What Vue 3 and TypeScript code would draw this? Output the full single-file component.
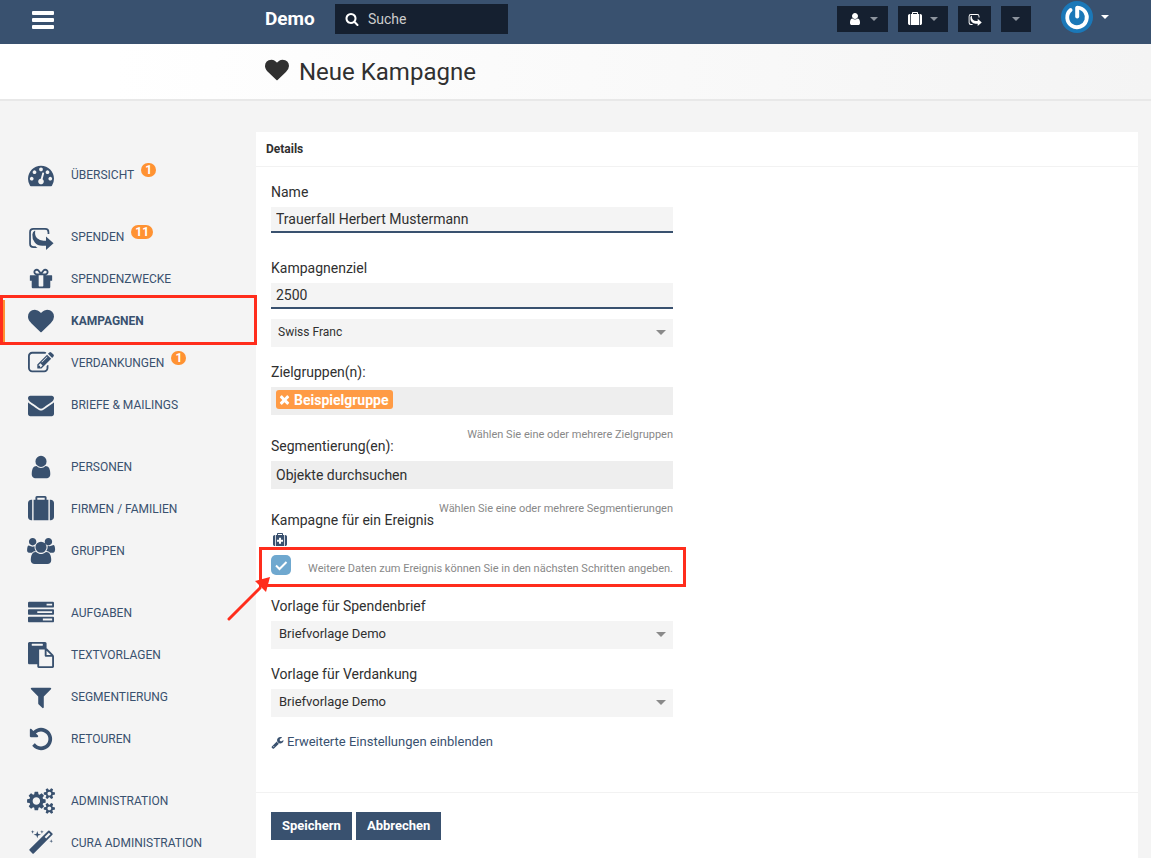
<script setup lang="ts">
import { ref } from 'vue'

interface NavItem {
  label: string
  icon: string
  badge?: number
  active?: boolean
}

const icons: Record<string, string> = {
  heart:
    'M896 1664q-26 0-44-18l-624-602q-10-8-27.500-26t-55.500-65.500-68-97.500-53.500-121-23.500-138q0-220 127-344t351-124q62 0 126.500 21.500t120 58 95.500 68.500 76 68q36-36 76-68t95.500-68.500 120-58 126.500-21.500q224 0 351 124t127 344q0 221-229 450l-623 600q-18 18-44 18z',
  envelope:
    'M1792 710v794q0 66-47 113t-113 47h-1472q-66 0-113-47t-47-113v-794q44 49 101 87 362 246 497 345 57 42 92.500 65.500t94.500 48 110 24.500h2q51 0 110-24.500t94.500-48 92.500-65.500q170-123 498-345 57-39 100-87zm0-294q0 79-49 151t-122 123q-376 261-468 325-10 7-42.500 30.500t-54 38-52 32.500-57.500 27-50 9h-2q-23 0-50-9t-57.500-27-52-32.500-54-38-42.500-30.500q-91-64-262-182.500t-205-142.500q-62-42-117-115.500t-55-136.500q0-78 41.500-130t118.500-52h1472q65 0 112.500 47t47.500 113z',
  user:
    'M1536 1399q0 109-62.500 187t-150.500 78h-854q-88 0-150.500-78t-62.500-187q0-85 8.500-160.500t31.500-152 58.500-131 94-89 134.500-34.500q131 128 313 128t313-128q76 0 134.500 34.500t94 89 58.500 131 31.500 152 8.500 160.500zm-256-887q0 159-112.500 271.500t-271.500 112.500-271.500-112.500-112.500-271.500 112.500-271.500 271.500-112.500 271.500 112.500 112.500 271.500z',
  filter:
    'M1595 295q17 41-14 70l-493 493v742q0 42-39 59-13 5-25 5-27 0-45-19l-256-256q-19-19-19-45v-486l-493-493q-31-29-14-70 17-39 59-39h1280q42 0 59 39z',
  search:
    'M1216 832q0-185-131.500-316.500t-316.500-131.500-316.500 131.500-131.500 316.500 131.500 316.500 316.500 131.500 316.500-131.500 131.500-316.500zm512 832q0 52-38 90t-90 38q-54 0-90-38l-343-342q-179 124-399 124-143 0-273.500-55.500t-225-150-150-225-55.500-273.500 55.500-273.500 150-225 225-150 273.500-55.500 273.500 55.500 225 150 150 225 55.500 273.500q0 220-124 399l343 343q37 37 37 90z',
  undo:
    'M1664 896q0 156-61 298t-164 245-245 164-298 61q-172 0-327-72.500t-264-204.500q-7-10-6.500-22.500t8.500-20.500l137-138q10-9 25-9 16 2 23 12 73 95 179 147t225 52q104 0 198.500-40.500t163.500-109.500 109.500-163.500 40.500-198.500-40.500-198.500-109.500-163.500-163.500-109.500-198.500-40.500q-98 0-188 35.500t-160 101.500l137 138q31 30 14 69-17 40-59 40h-448q-26 0-45-19t-19-45v-448q0-42 40-59 39-17 69 14l130 129q107-101 244.500-156.500t284.500-55.500q156 0 298 61t245 164 164 245 61 298z',
  suitcase:
    'M640 256h512v-128h-512v128zm-352 0v1408h-64q-92 0-158-66t-66-158v-960q0-92 66-158t158-66h64zm1120 0v1408h-1024v-1408h128v-160q0-40 28-68t68-28h576q40 0 68 28t28 68v160h128zm384 224v960q0 92-66 158t-158 66h-64v-1408h64q92 0 158 66t66 158z',
  medkit:
    'M1280 1088v-192q0-14-9-23t-23-9h-224v-224q0-14-9-23t-23-9h-192q-14 0-23 9t-9 23v224h-224q-14 0-23 9t-9 23v192q0 14 9 23t23 9h224v224q0 14 9 23t23 9h192q14 0 23-9t9-23v-224h224q14 0 23-9t9-23zm-640-832h512v-128h-512v128zm-384 0v1408h-32q-92 0-158-66t-66-158v-960q0-92 66-158t158-66h32zm1184 0v1408h-1088v-1408h160v-160q0-40 28-68t68-28h576q40 0 68 28t28 68v160h160zm352 224v960q0 92-66 158t-158 66h-32v-1408h32q92 0 158 66t66 158z',
  wrench:
    'M448 1472q0-26-19-45t-45-19-45 19-19 45 19 45 45 19 45-19 19-45zm644-420l-682 682q-37 37-90 37-52 0-91-37l-106-108q-38-36-38-90 0-53 38-91l681-681q39 98 114.500 173.500t173.500 114.500zm634-435q0 39-23 106-47 134-164.500 217.500t-258.500 83.500q-185 0-316.500-131.500t-131.500-316.500 131.500-316.500 316.500-131.500q58 0 121.500 16.500t107.500 46.500q16 11 16 28t-16 28l-293 169v224l193 107q5-3 79-48.500t135.500-81 70.500-35.500q15 0 23.500 10t8.500 25z',
  times:
    'M1490 1322q0 40-28 68l-136 136q-28 28-68 28t-68-28l-294-294-294 294q-28 28-68 28t-68-28l-136-136q-28-28-28-68t28-68l294-294-294-294q-28-28-28-68t28-68l136-136q28-28 68-28t68 28l294 294 294-294q28-28 68-28t68 28l136 136q28 28 28 68t-28 68l-294 294 294 294q28 28 28 68z',
  gauge:
    'M384 1152q0-53-37.500-90.500t-90.500-37.500-90.500 37.500-37.500 90.500 37.500 90.500 90.500 37.500 90.500-37.500 37.500-90.500zm192-448q0-53-37.500-90.500t-90.500-37.500-90.500 37.500-37.500 90.500 37.500 90.500 90.500 37.500 90.500-37.500 37.500-90.500zm428 481l101-382q6-26-7.500-48.500t-38.500-29.500-48 6.500-30 39.500l-101 382q-60 5-107 43.500t-63 98.500q-20 77 20 146t117 89 146-20 89-117q16-60-6-117t-72-91zm660-33q0-53-37.500-90.500t-90.500-37.500-90.500 37.500-37.500 90.500 37.500 90.500 90.500 37.500 90.500-37.500 37.500-90.500zm-640-640q0-53-37.500-90.500t-90.500-37.500-90.500 37.500-37.500 90.500 37.500 90.500 90.500 37.500 90.500-37.500 37.500-90.500zm448 192q0-53-37.500-90.500t-90.500-37.500-90.500 37.500-37.500 90.500 37.500 90.500 90.500 37.500 90.500-37.500 37.500-90.500zm320 448q0 261-141 483-19 29-54 29h-1402q-35 0-54-29-141-221-141-483 0-182 71-348t191-286 286-191 348-71 348 71 286 191 191 286 71 348z',
  gift:
    'M1056 1356v-716h-320v716q0 25 18 38.500t46 13.500h192q28 0 46-13.500t18-38.500zm-456-844h195l-126-161q-26-31-69-31-40 0-68 28t-28 68 28 68 68 28zm688-96q0-40-28-68t-68-28q-43 0-69 31l-125 161h194q40 0 68-28t28-68zm376 256v320q0 14-9 23t-23 9h-96v416q0 40-28 68t-68 28h-1088q-40 0-68-28t-28-68v-416h-96q-14 0-23-9t-9-23v-320q0-14 9-23t23-9h440q-93 0-158.500-65.500t-65.500-158.500 65.500-158.500 158.500-65.500q107 0 168 77l128 165 128-165q61-77 168-77 93 0 158.500 65.500t65.500 158.500-65.500 158.500-158.500 65.500h440q14 0 23 9t9 23z',
  edit:
    'M888 1184l116-116-152-152-116 116v56h96v96h56zm440-720q-16-16-33 1l-350 350q-17 17-1 33t33-1l350-350q17-17 1-33zm80 594v190q0 119-84.500 203.500t-203.500 84.500h-832q-119 0-203.500-84.500t-84.500-203.500v-832q0-119 84.500-203.500t203.500-84.500h832q63 0 117 25 15 7 18 23 3 17-9 29l-49 49q-14 14-32 8-23-6-45-6h-832q-66 0-113 47t-47 113v832q0 66 47 113t113 47h832q66 0 113-47t47-113v-126q0-13 9-22l64-64q15-15 35-7t20 29zm-96-738l288 288-672 672h-288v-288zm444 132l-92 92-288-288 92-92q28-28 68-28t68 28l152 152q28 28 28 68t-28 68z',
  users:
    'M529 896q-162 5-265 128h-134q-82 0-138-40.500t-56-118.500q0-353 124-353 6 0 43.500 21t97.500 42.500 119 21.500q67 0 133-23-5 37-5 66 0 159 93 293zm1071 637q0 120-73 189.500t-194 69.500h-874q-121 0-194-69.500t-73-189.500q0-53 3.500-103.500t14-109 26.500-108.500 43-97.500 62-81 85.500-53.500 111.500-20q10 0 43 21.500t73 48 107 48 135 21.500 135-21.500 107-48 73-48 43-21.500q61 0 111.500 20t85.500 53.500 62 81 43 97.500 26.500 108.500 14 109 3.500 103.500zm-1024-1277q0 106-75 181t-181 75-181-75-75-181 75-181 181-75 181 75 75 181zm704 384q0 159-112.500 271.500t-271.500 112.500-271.500-112.500-112.500-271.500 112.500-271.500 271.500-112.500 271.500 112.500 112.500 271.500zm576 225q0 78-56 118.500t-138 40.500h-134q-103-123-265-128 93-134 93-293 0-29-5-66 66 23 133 23 59 0 119-21.500t97.500-42.500 43.500-21q124 0 124 353zm-192-609q0 106-75 181t-181 75-181-75-75-181 75-181 181-75 181 75 75 181z',
  paste:
    'M768 1664h896v-640h-416q-40 0-68-28t-28-68v-416h-384v1152zm256-1440v-64q0-13-9.500-22.500t-22.500-9.500h-704q-13 0-22.500 9.500t-9.500 22.500v64q0 13 9.500 22.500t22.500 9.500h704q13 0 22.500-9.500t9.500-22.500zm256 672h299l-299-299v299zm512 128v672q0 40-28 68t-68 28h-960q-40 0-68-28t-28-68v-160h-544q-40 0-68-28t-28-68v-1344q0-40 28-68t68-28h1088q40 0 68 28t28 68v328q21 13 36 28l408 408q28 28 48 76t20 88z',
  tasks:
    'M1024 1408h640v-128h-640v128zm-384-512h1024v-128h-1024v128zm640-512h384v-128h-384v128zm512 832v256q0 26-19 45t-45 19h-1664q-26 0-45-19t-19-45v-256q0-26 19-45t45-19h1664q26 0 45 19t19 45zm0-512v256q0 26-19 45t-45 19h-1664q-26 0-45-19t-19-45v-256q0-26 19-45t45-19h1664q26 0 45 19t19 45zm0-512v256q0 26-19 45t-45 19h-1664q-26 0-45-19t-19-45v-256q0-26 19-45t45-19h1664q26 0 45 19t19 45z',
  cogs:
    'M832 896q0-106-75-181t-181-75-181 75-75 181 75 181 181 75 181-75 75-181zm768 512q0-52-38-90t-90-38-90 38-38 90q0 53 37.500 90.500t90.500 37.500 90.500-37.500 37.500-90.500zm0-1024q0-52-38-90t-90-38-90 38-38 90q0 53 37.500 90.500t90.500 37.500 90.500-37.500 37.500-90.500zm-384 421v185q0 10-7 19.500t-16 10.500l-155 24q-11 35-32 76 34 48 90 115 7 11 7 20 0 12-7 19-23 30-82.500 89.500t-78.500 59.500q-11 0-21-7l-115-90q-37 19-77 31-11 108-23 155-7 24-30 24h-186q-11 0-20-7.500t-10-17.500l-23-153q-34-10-75-31l-118 89q-7 7-20 7-11 0-21-8-144-133-144-160 0-9 7-19 10-14 41-53t47-61q-23-44-35-82l-152-24q-10-1-17-9.500t-7-19.500v-185q0-10 7-19.500t16-10.500l155-24q11-35 32-76-34-48-90-115-7-11-7-20 0-12 7-20 22-30 82-89t79-59q11 0 21 7l115 90q34-18 77-32 11-108 23-154 7-24 30-24h186q11 0 20 7.500t10 17.500l23 153q34 10 75 31l118-89q8-7 20-7 11 0 21 8 144 133 144 160 0 8-7 19-12 16-42 54t-45 60q23 48 34 82l152 23q10 2 17 10.500t7 19.500zm640 533v140q0 16-149 31-12 27-30 52 51 113 51 138 0 4-4 7-122 71-124 71-8 0-46-47t-52-68q-20 2-30 2t-30-2q-14 21-52 68t-46 47q-2 0-124-71-4-3-4-7 0-25 51-138-18-25-30-52-149-15-149-31v-140q0-16 149-31 13-29 30-52-51-113-51-138 0-4 4-7 4-2 35-20t59-34 30-16q8 0 46 46.500t52 67.500q20-2 30-2t30 2q51-71 92-112l6-2q4 0 124 70 4 3 4 7 0 25-51 138 17 23 30 52 149 15 149 31zm0-1024v140q0 16-149 31-12 27-30 52 51 113 51 138 0 4-4 7-122 71-124 71-8 0-46-47t-52-68q-20 2-30 2t-30-2q-14 21-52 68t-46 47q-2 0-124-71-4-3-4-7 0-25 51-138-18-25-30-52-149-15-149-31v-140q0-16 149-31 13-29 30-52-51-113-51-138 0-4 4-7 4-2 35-20t59-34 30-16q8 0 46 46.500t52 67.500q20-2 30-2t30 2q51-71 92-112l6-2q4 0 124 70 4 3 4 7 0 25-51 138 17 23 30 52 149 15 149 31z',
  magic:
    'M1254 581l293-293-107-107-293 293zm447-293q0 27-18 45l-1286 1286q-18 18-45 18t-45-18l-198-198q-18-18-18-45t18-45l1286-1286q18-18 45-18t45 18l198 198q18 18 18 45zm-1351-190l98 30-98 30-30 98-30-98-98-30 98-30 30-98zm350 162l196 60-196 60-60 196-60-196-196-60 196-60 60-196zm930 478l98 30-98 30-30 98-30-98-98-30 98-30 30-98zm-640-640l98 30-98 30-30 98-30-98-98-30 98-30 30-98z',
  donate:
    'M660 1660h-280q-300 0-300-300v-800q0-290 290-290h820q280 0 280 290v130h-120v-130q0-170-170-170h-800q-180 0-180 180v770q0 190 200 190h120q60 70 140 130zM500 470q-60 330 130 510 170 170 440 170h170v-290l520 470-520 460v-290h-260q-330 0-510-220-200-250-170-550 20-180 150-260z',
}

const navGroups: NavItem[][] = [
  [{ label: 'ÜBERSICHT', icon: 'gauge', badge: 1 }],
  [
    { label: 'SPENDEN', icon: 'donate', badge: 11 },
    { label: 'SPENDENZWECKE', icon: 'gift' },
    { label: 'KAMPAGNEN', icon: 'heart', active: true },
    { label: 'VERDANKUNGEN', icon: 'edit', badge: 1 },
    { label: 'BRIEFE & MAILINGS', icon: 'envelope' },
  ],
  [
    { label: 'PERSONEN', icon: 'user' },
    { label: 'FIRMEN / FAMILIEN', icon: 'suitcase' },
    { label: 'GRUPPEN', icon: 'users' },
  ],
  [
    { label: 'AUFGABEN', icon: 'tasks' },
    { label: 'TEXTVORLAGEN', icon: 'paste' },
    { label: 'SEGMENTIERUNG', icon: 'filter' },
    { label: 'RETOUREN', icon: 'undo' },
  ],
  [
    { label: 'ADMINISTRATION', icon: 'cogs' },
    { label: 'CURA ADMINISTRATION', icon: 'magic' },
  ],
]

const name = ref('Trauerfall Herbert Mustermann')
const goal = ref('2500')
const currency = ref('Swiss Franc')
const letterTemplate = ref('Briefvorlage Demo')
const thanksTemplate = ref('Briefvorlage Demo')
const isEvent = ref(true)
</script>

<template>
  <div class="page">
    <header class="topbar">
      <div class="topbar-side">
        <button class="menu" type="button" aria-label="Menü"><i></i><i></i><i></i></button>
      </div>
      <a class="brand" href="#">Demo</a>
      <label class="search">
        <svg viewBox="0 0 1792 1792"><path :d="icons.search" /></svg>
        <input type="search" placeholder="Suche" aria-label="Suche" />
      </label>
      <div class="tools">
        <button class="tool tool-person" type="button" aria-label="Personen">
          <svg viewBox="0 0 1792 1792"><path :d="icons.user" /></svg><i class="caret"></i>
        </button>
        <button class="tool tool-company" type="button" aria-label="Firmen">
          <svg viewBox="0 0 1792 1792"><path :d="icons.suitcase" /></svg><i class="caret"></i>
        </button>
        <button class="tool tool-donation" type="button" aria-label="Spenden">
          <svg viewBox="0 0 1792 1792"><path :d="icons.donate" /></svg>
        </button>
        <button class="tool tool-more" type="button" aria-label="Mehr"><i class="caret"></i></button>
      </div>
      <button class="account" type="button" aria-label="Konto">
        <svg class="avatar" viewBox="0 0 32 32">
          <circle cx="16" cy="16" r="16" fill="#1b78b8" />
          <path d="M9.600 9A9.800 9.800 0 1 0 16.500 6.600" fill="none" stroke="#fff" stroke-width="3.800" stroke-linecap="round" />
          <path d="M16.200 7v8.500" fill="none" stroke="#fff" stroke-width="4" stroke-linecap="round" />
        </svg>
        <i class="caret"></i>
      </button>
    </header>

    <div class="titlebar">
      <svg viewBox="0 0 1792 1792"><path :d="icons.heart" /></svg>
      <h1>Neue Kampagne</h1>
    </div>

    <div class="body">
      <nav class="sidebar">
        <ul v-for="(group, g) in navGroups" :key="g">
          <li v-for="item in group" :key="item.label">
            <a href="#" class="nav-item" :class="{ active: item.active }">
              <svg viewBox="0 0 1792 1792"><path :d="icons[item.icon]" /></svg>
              <span>{{ item.label }}</span>
              <b v-if="item.badge" class="badge">{{ item.badge }}</b>
            </a>
          </li>
        </ul>
      </nav>

      <form class="panel" @submit.prevent>
        <h2>Details</h2>
        <div class="fields">
          <label for="name">Name</label>
          <input id="name" v-model="name" class="text" type="text" />

          <label class="spaced" for="goal">Kampagnenziel</label>
          <input id="goal" v-model="goal" class="text" type="text" />
          <div class="select currency">
            <select v-model="currency" aria-label="Währung"><option>Swiss Franc</option></select>
            <i class="caret"></i>
          </div>

          <label class="next" for="groups">Zielgruppen(n):</label>
          <div class="tags">
            <span class="tag">
              <button type="button" aria-label="Entfernen">
                <svg viewBox="192 192 1408 1408"><path :d="icons.times" /></svg>
              </button>
              Beispielgruppe
            </span>
            <input id="groups" type="text" />
          </div>
          <p class="hint">Wählen Sie eine oder mehrere Zielgruppen</p>

          <label for="segments">Segmentierung(en):</label>
          <input id="segments" class="lookup" type="text" placeholder="Objekte durchsuchen" />
          <p class="hint">Wählen Sie eine oder mehrere Segmentierungen</p>

          <label for="event">Kampagne für ein Ereignis</label>
          <svg class="medkit" viewBox="0 0 1792 1792"><path :d="icons.medkit" /></svg>
          <div class="event">
            <input id="event" v-model="isEvent" type="checkbox" />
            <svg v-if="isEvent" class="tick" viewBox="0 0 20 20"><path d="M5 10.500l3.500 3.500 7-7" /></svg>
            <span>Weitere Daten zum Ereignis können Sie in den nächsten Schritten angeben.</span>
            <svg class="arrow" viewBox="0 0 44 46">
              <path d="M2 44L33 13" stroke="#ff2d1c" stroke-width="3" stroke-linecap="round" />
              <path d="M43 2L39 17L28 6Z" fill="#ff2d1c" />
            </svg>
          </div>

          <label for="letter">Vorlage für Spendenbrief</label>
          <div class="select">
            <select id="letter" v-model="letterTemplate"><option>Briefvorlage Demo</option></select>
            <i class="caret"></i>
          </div>

          <label class="next" for="thanks">Vorlage für Verdankung</label>
          <div class="select">
            <select id="thanks" v-model="thanksTemplate"><option>Briefvorlage Demo</option></select>
            <i class="caret"></i>
          </div>

          <a class="more" href="#">
            <svg viewBox="0 0 1792 1792"><path :d="icons.wrench" /></svg>
            Erweiterte Einstellungen einblenden
          </a>
        </div>
        <footer>
          <button type="submit">Speichern</button>
          <button type="button">Abbrechen</button>
        </footer>
      </form>
    </div>
  </div>
</template>

<style>
body {
  background: #f4f4f4;
}
</style>

<style scoped>
.page {
  font-family: Roboto, "Liberation Sans", sans-serif;
  font-size: 14px;
  line-height: 20px;
  color: #303030;
  min-height: 100vh;
  background: #f4f4f4;
}
.page *,
.page {
  box-sizing: border-box;
}
button,
input,
select {
  font: inherit;
  color: inherit;
  border: 0;
  border-radius: 0;
  padding: 0;
  margin: 0;
  background: none;
  appearance: none;
  outline: 0;
}
button {
  cursor: pointer;
}
a {
  color: inherit;
  text-decoration: none;
}
svg {
  fill: currentColor;
  overflow: visible;
  flex: none;
}
.caret {
  width: 0;
  height: 0;
  border: 4px solid transparent;
  border-top-color: currentColor;
  border-bottom: 0;
}

.topbar {
  display: flex;
  align-items: flex-start;
  height: 44px;
  padding-right: 42px;
  background: #39516f;
  color: #fff;
}
.topbar-side {
  width: 265px;
  padding: 11px 32px;
}
.menu {
  display: flex;
  flex-direction: column;
  gap: 3px;
  width: 22px;
}
.menu i {
  width: 22px;
  height: 4px;
  border-radius: 1px;
  background: #fff;
}
.brand {
  width: 70px;
  line-height: 38px;
  font-size: 19px;
  font-weight: 700;
}
.search {
  display: flex;
  align-items: center;
  gap: 9px;
  width: 173px;
  height: 30px;
  margin-top: 4px;
  padding: 0 10px;
  background: #152030;
}
.search svg {
  width: 14px;
  height: 14px;
}
.search input {
  flex: 1;
  min-width: 0;
}
.search input::placeholder {
  color: #ccc;
  opacity: 1;
}
.tools {
  display: flex;
  gap: 10px;
  margin: 6px 30px 0 auto;
}
.tool {
  display: flex;
  align-items: center;
  justify-content: center;
  gap: 8px;
  height: 26px;
  background: #152030;
}
.tool svg {
  width: 14px;
  height: 14px;
}
.tool .caret {
  color: #8d949e;
}
.tool-person {
  width: 51px;
}
.tool-company {
  width: 50px;
}
.tool-donation {
  width: 33px;
}
.tool-more {
  width: 30px;
}
.account {
  display: flex;
  align-items: center;
  gap: 8px;
  margin-top: 1px;
}
.avatar {
  width: 32px;
  height: 32px;
}

.titlebar {
  display: flex;
  align-items: center;
  gap: 10px;
  height: 57px;
  padding-left: 265px;
  border-bottom: 2px solid #e8e8e8;
  background: linear-gradient(90deg, #fff 10%, #f4f4f4);
}
.titlebar svg {
  width: 24px;
  height: 24px;
  margin-bottom: 4px;
}
h1 {
  margin: 0;
  font-size: 24px;
  line-height: 32px;
  font-weight: 400;
}

.body {
  display: flex;
  align-items: flex-start;
  padding-right: 13px;
}
.sidebar {
  width: 256px;
  flex: none;
  padding-top: 53px;
  color: #39516f;
}
.sidebar ul {
  list-style: none;
  margin: 0 0 20px;
  padding: 0;
}
.nav-item {
  position: relative;
  display: flex;
  align-items: center;
  height: 42px;
  padding-left: 28px;
  font-size: 12px;
}
.nav-item svg {
  width: 26px;
  height: 26px;
  margin-right: 17px;
}
.active {
  padding-left: 23px;
  border-left: 5px solid #ff9232;
  font-weight: 700;
}
.active::after {
  content: "";
  position: absolute;
  z-index: 2;
  inset: -5px -1px -3px -5px;
  border: 3px solid #ff2d1c;
}
.badge {
  align-self: flex-start;
  min-width: 15px;
  height: 14px;
  margin: 9px 0 0 7px;
  padding: 0 4px;
  border-radius: 7px;
  background: #ff9232;
  color: #fff;
  font-size: 12px;
  line-height: 14px;
  text-align: center;
}

.panel {
  flex: 1;
  min-width: 0;
  margin-top: 31px;
  background: #fff;
}
h2 {
  margin: 0;
  padding: 7px 10px;
  border-bottom: 1px solid #f2f2f2;
  font-size: 12px;
  line-height: 20px;
  font-weight: 700;
}
.fields {
  width: 402px;
  margin: 15px 15px 40px;
}
.fields > label {
  display: block;
  margin-bottom: 5px;
}
.fields > .spaced {
  margin-top: 25px;
}
.fields > .next {
  margin-top: 15px;
}
.text {
  display: block;
  width: 100%;
  height: 26px;
  padding: 0 5px;
  border-bottom: 2px solid #39516f;
  background: #f4f4f4;
}
.select {
  position: relative;
}
.select select {
  display: block;
  width: 100%;
  height: 28px;
  padding: 0 24px 2px 8px;
  background: #f4f4f4;
  font-size: 13px;
}
.select .caret {
  position: absolute;
  top: 11px;
  right: 7px;
  border-width: 5px;
  border-bottom: 0;
  color: #8a8a8a;
  pointer-events: none;
}
.currency {
  margin-top: 10px;
}
.currency select {
  padding-left: 7px;
  font-size: 12px;
}
.tags {
  display: flex;
  align-items: flex-start;
  height: 28px;
  padding: 3px 5px;
  background: #eee;
}
.tag {
  display: flex;
  align-items: center;
  gap: 4px;
  height: 19px;
  padding: 0 4px 0 3px;
  border-radius: 3px;
  background: #ff9b45;
  color: #fff;
  font-weight: 700;
}
.tag button {
  display: flex;
}
.tag svg {
  width: 11px;
  height: 11px;
}
.tags input {
  flex: 1;
  min-width: 0;
}
.lookup {
  display: block;
  width: 100%;
  height: 28px;
  padding: 0 5px;
  background: #eee;
}
.lookup::placeholder {
  color: #303030;
  opacity: 1;
}
.hint {
  margin: 12px 0 -7px;
  line-height: 16px;
  font-size: 11px;
  text-align: right;
  color: #888;
}
.medkit {
  display: block;
  width: 14px;
  height: 14px;
  margin: -2px 0 8px 2px;
  color: #39516f;
}
.event {
  position: relative;
  display: flex;
  align-items: flex-start;
  justify-content: space-between;
  height: 21px;
  margin-bottom: 20px;
}
.event input {
  width: 20px;
  height: 20px;
  border-radius: 5px;
  background: #6fa8cf;
}
.event .tick {
  position: absolute;
  top: 0;
  left: 0;
  width: 20px;
  height: 20px;
  fill: none;
  stroke: #fff;
  stroke-width: 2;
  pointer-events: none;
}
.event span {
  padding-top: 6px;
  line-height: 16px;
  font-size: 11px;
  color: #888;
}
.event::after {
  content: "";
  position: absolute;
  inset: -8px -13px -11px -12px;
  border: 3px solid #ff2d1c;
  pointer-events: none;
}
.event .arrow {
  position: absolute;
  z-index: 3;
  top: 20px;
  left: -44px;
  width: 44px;
  height: 46px;
  pointer-events: none;
}
.more {
  display: flex;
  align-items: center;
  gap: 3px;
  margin-top: 15px;
  font-size: 13px;
  color: #39516f;
}
.more svg {
  width: 13px;
  height: 13px;
}
footer {
  display: flex;
  gap: 4px;
  padding: 19px 15px 40px;
  border-top: 1px solid #f2f2f2;
}
footer button {
  height: 28px;
  padding: 0 11px;
  background: #39516f;
  color: #fff;
  font-size: 13px;
  font-weight: 700;
}
</style>
